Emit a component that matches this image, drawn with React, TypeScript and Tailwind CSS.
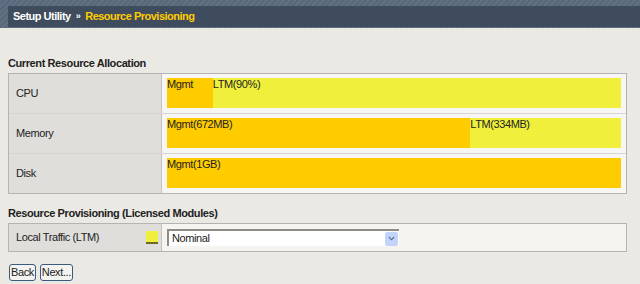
import { FaChevronDown } from "react-icons/fa";

const rows = [
  {
    name: "CPU",
    parts: [
      { label: "Mgmt", pct: 10.1, color: "bg-[#ffcc00]" },
      { label: "LTM(90%)", pct: 89.9, color: "bg-[#f0f03c]" },
    ],
  },
  {
    name: "Memory",
    parts: [
      { label: "Mgmt(672MB)", pct: 66.8, color: "bg-[#ffcc00]" },
      { label: "LTM(334MB)", pct: 33.2, color: "bg-[#f0f03c]" },
    ],
  },
  {
    name: "Disk",
    parts: [{ label: "Mgmt(1GB)", pct: 100, color: "bg-[#ffcc00]" }],
  },
];

export default function App() {
  return (
    <div className="h-[284px] w-[640px] overflow-hidden bg-[#ebe9e4] font-['Liberation_Sans',Arial,sans-serif] text-[11px] tracking-[-0.4px] text-[#222]">
      {/* header */}
      <div className="h-[28px] bg-[repeating-linear-gradient(135deg,#617083_0px,#617083_2px,#58677a_2px,#58677a_4px)] pt-[6px] pl-[8px]">
        <div className="flex h-[21px] items-center gap-[5px] bg-[#3f4c5d] pl-[5px] text-[11px] font-bold tracking-[-0.5px]">
          <span className="text-white">Setup Utility</span>
          <span className="text-[9px] text-white">»</span>
          <span className="text-[#ffcc00]">Resource Provisioning</span>
        </div>
      </div>

      <div className="pl-[8px] pr-[13px]">
        <div className="mt-[29px] mb-[3px] leading-[13px] font-bold">Current Resource Allocation</div>
        <div className="border border-[#b4b4b2] bg-[#f7f6f4]">
          {rows.map((row, i) => (
            <div
              key={row.name}
              className={`flex ${i > 0 ? "h-[40px] border-t border-[#d6d5d2]" : "h-[39px]"}`}
            >
              <div className="flex w-[153px] items-center border-r border-[#c4c3c0] bg-[#dfdedb] pl-[7px]">
                {row.name}
              </div>
              <div className="flex flex-1 px-[5px] pt-[4px]">
                {row.parts.map((p) => (
                  <div
                    key={p.label}
                    className={`${p.color} h-[30px] leading-[13px]`}
                    style={{ width: `${p.pct}%` }}
                  >
                    {p.label}
                  </div>
                ))}
              </div>
            </div>
          ))}
        </div>

        <div className="mt-[13px] mb-[3px] leading-[13px] font-bold">Resource Provisioning (Licensed Modules)</div>
        <div className="flex h-[29px] border border-[#b4b4b2] bg-[#f5f4f1]">
          <div className="flex w-[153px] items-center justify-between border-r border-[#c4c3c0] bg-[#dfdedb] pl-[7px] pr-[3px]">
            <span>Local Traffic (LTM)</span>
            <span className="h-[13px] w-[12px] border-b-2 border-[#6b6a2a] bg-[#f0f03c]" />
          </div>
          <div className="flex items-center pl-[5px]">
            <div className="flex h-[17px] w-[232px] items-center border-t-2 border-l-2 border-[#8f8c84] bg-white">
              <span className="flex-1 pl-[3px]">Nominal</span>
              <span className="mr-[1px] flex h-[14px] w-[13px] items-center justify-center rounded-[2px] bg-[#c3d4fb] text-[#4d6185]">
                <FaChevronDown size={7} />
              </span>
            </div>
          </div>
        </div>

        <div className="mt-[12px] flex gap-[4px] pl-[1px]">
          <button className="h-[17px] rounded-[3px] border border-[#3b5a80] bg-[#f3f3ef] px-[1px] py-0 text-[11px] leading-[15px]">
            Back
          </button>
          <button className="h-[17px] rounded-[3px] border border-[#3b5a80] bg-[#f3f3ef] px-[1px] py-0 text-[11px] leading-[15px]">
            Next...
          </button>
        </div>
      </div>
    </div>
  );
}
